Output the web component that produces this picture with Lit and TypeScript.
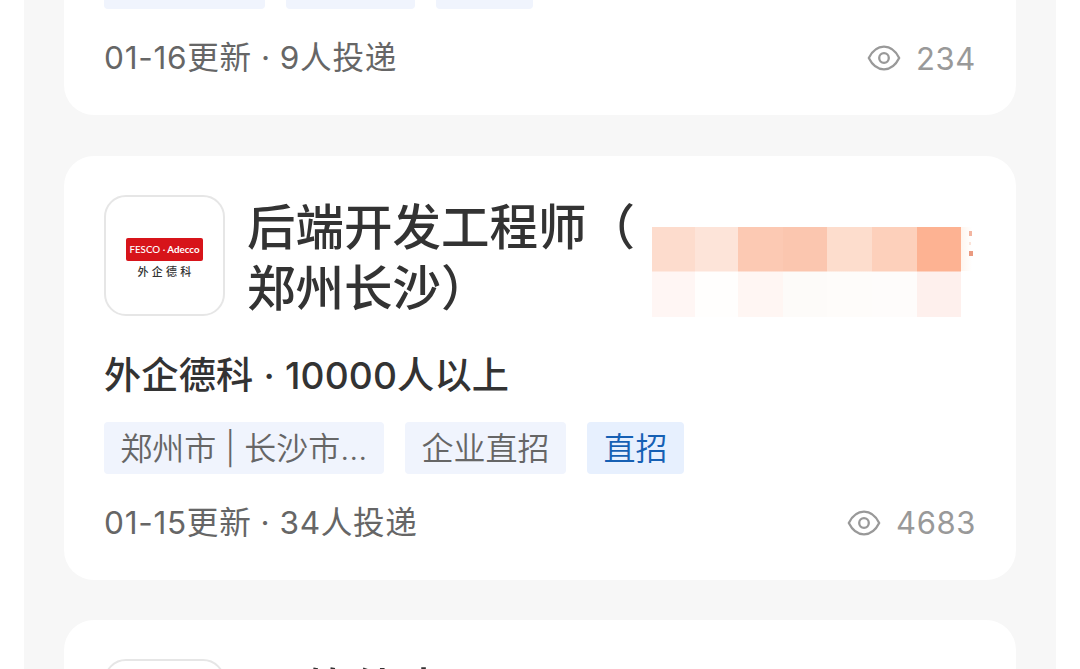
import {css, html, LitElement, nothing} from "lit";
import {customElement, property} from "lit/decorators.js";
import {styleMap} from "lit/directives/style-map.js";

interface Tag {
  label: string;
  accent?: boolean;
}

interface Job {
  title: string[];
  company: string;
  tags: Tag[];
  updated: string;
  views: string;
}

const JOBS: Job[] = [
  {
    title: [],
    company: "",
    tags: [{label: "　　　　"}, {label: "　　　"}, {label: "　　"}],
    updated: "01-16更新 · 9人投递",
    views: "234",
  },
  {
    title: ["后端开发工程师（", "郑州长沙）"],
    company: "外企德科 · 10000人以上",
    tags: [{label: "郑州市 | 长沙市..."}, {label: "企业直招"}, {label: "直招", accent: true}],
    updated: "01-15更新 · 34人投递",
    views: "4683",
  },
  {
    title: ["IT 软件岗"],
    company: "",
    tags: [],
    updated: "",
    views: "",
  },
];

@customElement("job-logo")
export class JobLogoElement extends LitElement {
  protected render(): unknown {
    return html`
      <div class="brand"><span>FESCO ·</span><b>Adecco</b></div>
      <div class="name">外企德科</div>
    `
  }

  static styles = css`
    :host {
      box-sizing: border-box;
      width: 121px;
      height: 121px;
      flex: none;
      display: flex;
      flex-direction: column;
      align-items: center;
      padding-top: 41px;
      border: 2px solid #e6e6e6;
      border-radius: 22px;
      background: #fff;
    }

    .brand {
      width: 77px;
      height: 23px;
      display: flex;
      align-items: center;
      justify-content: center;
      gap: 2px;
      border-radius: 2px;
      background: #d7141a;
      color: #fff;
      font: 500 9.8px/23px Lato, sans-serif;
      white-space: nowrap;
    }

    .brand b {
      font-weight: 700;
    }

    .name {
      margin-top: 2px;
      padding-left: 3px;
      font: 500 11px/16px "Noto Sans CJK SC", sans-serif;
      letter-spacing: 3.2px;
      color: #333;
    }
  `
}

@customElement("salary-mosaic")
export class SalaryMosaicElement extends LitElement {
  // width, upper colour, lower colour
  private cells: [number, string, string][] = [
    [43, "#fddccd", "#fff6f4"],
    [43, "#fde4d9", "#fffefd"],
    [45, "#fcc9b3", "#fff6f3"],
    [44, "#fbc6af", "#fdfbf9"],
    [45, "#fdddcd", "#fefcfa"],
    [45, "#fdd0bb", "#fefcfb"],
    [44, "#fdb292", "#fef0ed"],
  ];

  protected render(): unknown {
    return html`
      ${this.cells.map(([width, top, bottom]) => html`
        <div class="cell" style=${styleMap({
          "--w": `${width}px`,
          "--top": top,
          "--bottom": bottom,
        })}></div>
      `)}
      <div class="edge"><i></i><i></i><i></i></div>
    `
  }

  static styles = css`
    :host {
      height: 90px;
      display: flex;
    }

    .cell {
      width: var(--w);
      background: linear-gradient(var(--top) 44px, var(--bottom) 45px);
    }

    .edge {
      width: 11px;
      height: 44px;
      box-sizing: border-box;
      padding: 4px 0 0 8px;
      display: flex;
      flex-direction: column;
      gap: 6px;
      background: linear-gradient(90deg, #fff5ee, #fff);
    }

    .edge i {
      width: 3px;
      height: 5px;
      background: #f3b5a0;
    }

    .edge i:nth-child(2) {
      width: 2px;
      height: 3px;
      background: #fbe3d9;
    }

    .edge i:nth-child(3) {
      width: 4px;
      background: #ea9a80;
    }
  `
}

@customElement("job-card")
export class JobCardElement extends LitElement {
  @property({attribute: false}) public job!: Job;

  protected render(): unknown {
    const {title, company, tags, updated, views} = this.job;

    return html`
      <div class="head">
        <job-logo></job-logo>
        <div class="title">${title.map((line) => html`<div>${line}</div>`)}</div>
        ${title.length > 1 ? html`<salary-mosaic></salary-mosaic>` : nothing}
      </div>
      <div class="company">${company}</div>
      <div class="tags">
        ${tags.map((tag) => html`<span class="tag ${tag.accent ? "accent" : ""}">${tag.label}</span>`)}
      </div>
      <div class="foot">
        <span class="updated">${updated}</span>
        <span class="views">
          <svg width="34" height="28" viewBox="0 0 34 28" fill="none" stroke="currentColor" stroke-width="2.3" stroke-linejoin="round">
            <path d="M1.8 14C5.3 7 10.5 2.7 17 2.7S28.7 7 32.2 14C28.7 21 23.5 25.3 17 25.3S5.3 21 1.8 14Z"/>
            <circle cx="17" cy="14" r="4.8"/>
          </svg>
          ${views}
        </span>
      </div>
    `
  }

  static styles = css`
    :host {
      box-sizing: border-box;
      height: 424px;
      flex: none;
      display: flex;
      flex-direction: column;
      padding: 39px 40px 0;
      border-radius: 30px;
      background: #fff;
      font-family: Inter, "Noto Sans CJK SC", sans-serif;
      white-space: nowrap;
    }

    .head {
      height: 121px;
      display: flex;
    }

    .title {
      flex: 1;
      margin: -1px 0 0 22px;
      font: 500 48.5px/61px "Noto Sans CJK SC", sans-serif;
      color: #333;
    }

    salary-mosaic {
      margin: 32px 4px 0 0;
    }

    .company {
      height: 56px;
      margin-top: 32px;
      font-size: 37.2px;
      line-height: 56px;
      font-weight: 450;
      letter-spacing: 0.15px;
      color: #333;
    }

    .tags {
      height: 52px;
      margin-top: 18px;
      display: flex;
      gap: 21.5px;
    }

    .tag {
      padding: 0 16.3px;
      border-radius: 4px;
      background: #f0f4fd;
      color: #666;
      font-size: 32px;
      line-height: 54px;
      font-weight: 350;
    }

    .accent {
      background: #e7f0fe;
      color: #1660b4;
    }

    .foot {
      height: 48px;
      margin-top: 24px;
      display: flex;
      align-items: center;
      justify-content: space-between;
    }

    .updated {
      margin-top: -4px;
      font-size: 31.6px;
      font-weight: 380;
      letter-spacing: 0.7px;
      word-spacing: -0.5px;
      color: #666;
    }

    .views {
      display: flex;
      align-items: center;
      gap: 15px;
      margin-top: 2px;
      font-size: 31px;
      font-weight: 380;
      letter-spacing: 0.6px;
      color: #999;
    }
  `
}

@customElement("app-root")
export class AppRootElement extends LitElement {
  protected render(): unknown {
    return html`
      <div class="list">
        ${JOBS.map((job) => html`<job-card .job=${job}></job-card>`)}
      </div>
    `
  }

  static styles = css`
    :host {
      height: 669px;
      display: block;
      overflow: hidden;
      background: #fff;
    }

    /* The list is scrolled, so the first card is mostly above the fold. */
    .list {
      height: 669px;
      box-sizing: border-box;
      margin: 0 24px;
      padding: 0 40px;
      display: flex;
      flex-direction: column;
      gap: 40.5px;
      background: #f7f7f7;
    }

    job-card:first-child {
      margin-top: -309px;
    }
  `
}
